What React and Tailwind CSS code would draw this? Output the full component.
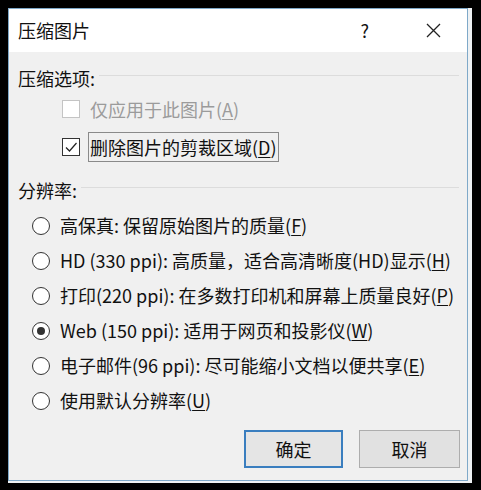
import { useState } from "react";

const font = { fontFamily: '"Noto Sans CJK SC", "Noto Sans", sans-serif' };

function Key({ k }) {
  return (
    <>
      (<span className="underline underline-offset-2">{k}</span>)
    </>
  );
}

function GroupLabel({ children, className = "" }) {
  return (
    <div className={`flex items-center h-[24px] ${className}`}>
      <span className="shrink-0">{children}</span>
      <div className="flex-1 h-px bg-[#dcdcdc] ml-1 mr-[8px] -mt-[6px]" />
    </div>
  );
}

function Radio({ checked, onClick, children }) {
  return (
    <div className="flex items-center h-[35px] pl-[14px] cursor-default" onClick={onClick}>
      <span className="w-[18px] h-[18px] rounded-full border-[1.5px] border-[#333] bg-white flex items-center justify-center shrink-0">
        {checked && <span className="w-[8px] h-[8px] rounded-full bg-[#333]" />}
      </span>
      <span className="ml-[10px] whitespace-nowrap">{children}</span>
    </div>
  );
}

export default function App() {
  const [res, setRes] = useState(3);
  const [crop, setCrop] = useState(true);

  const options = [
    <>高保真: 保留原始图片的质量<Key k="F" /></>,
    <>HD (330 ppi): 高质量，适合高清晰度(HD)显示<Key k="H" /></>,
    <>打印(220 ppi): 在多数打印机和屏幕上质量良好<Key k="P" /></>,
    <>Web (150 ppi): 适用于网页和投影仪<Key k="W" /></>,
    <>电子邮件(96 ppi): 尽可能缩小文档以便共享<Key k="E" /></>,
    <>使用默认分辨率<Key k="U" /></>,
  ];

  return (
    <div className="w-[481px] h-[490px] bg-black pt-[8px] pl-[8px] pr-[9px] pb-[7px]" style={font}>
      <div className="w-full h-full bg-[#eef1f3] pr-[4px] pb-[2px]">
        <div className="w-full h-full border border-[#7fa9c9] bg-[#f0f0f0] flex flex-col text-[18px] text-[#111]">
          {/* Title bar */}
          <div className="h-[43px] bg-white flex items-center pl-[9px] pr-[22px] shrink-0">
            <span className="text-[18px] flex-1">压缩图片</span>
            <span className="text-[18px] mr-[57px]">?</span>
            <svg width="15" height="15" viewBox="0 0 15 15" className="mr-[4px]">
              <path d="M1 1 L14 14 M14 1 L1 14" stroke="#222" strokeWidth="1.3" />
            </svg>
          </div>

          {/* Body */}
          <div className="flex flex-col pl-[9px] pt-[14px]">
            <GroupLabel>压缩选项:</GroupLabel>

            <div className="flex items-center h-[30px] mt-[4px] pl-[44px] text-[#9b9b9b]">
              <span className="w-[18px] h-[18px] border border-[#c4c4c4] bg-white shrink-0" />
              <span className="ml-[10px]">仅应用于此图片<Key k="A" /></span>
            </div>

            <div className="flex items-center h-[30px] mt-[8px] pl-[44px]" onClick={() => setCrop(c => !c)}>
              <span className="w-[18px] h-[18px] border border-[#333] bg-white shrink-0 flex items-center justify-center">
                {crop && (
                  <svg width="14" height="14" viewBox="0 0 14 14">
                    <path d="M2 7.5 L5.5 11 L12.5 3" fill="none" stroke="#222" strokeWidth="1.2" />
                  </svg>
                )}
              </span>
              <span className="ml-[8px] h-[30px] flex items-center px-[1px] border border-[#8a8a8a]">
                删除图片的剪裁区域<Key k="D" />
              </span>
            </div>

            <GroupLabel className="mt-[16px]">分辨率:</GroupLabel>

            <div className="mt-[6px] flex flex-col">
              {options.map((o, i) => (
                <Radio key={i} checked={res === i} onClick={() => setRes(i)}>{o}</Radio>
              ))}
            </div>

            <div className="flex justify-end gap-[16px] pr-[7px] mt-[12px]">
              <button className="w-[99px] h-[38px] bg-[#e5e5e5] border-2 border-[#3a7ebf] text-[18px]">确定</button>
              <button className="w-[101px] h-[38px] bg-[#e1e1e1] border border-[#adadad] text-[18px]">取消</button>
            </div>
          </div>
        </div>
      </div>
    </div>
  );
}
